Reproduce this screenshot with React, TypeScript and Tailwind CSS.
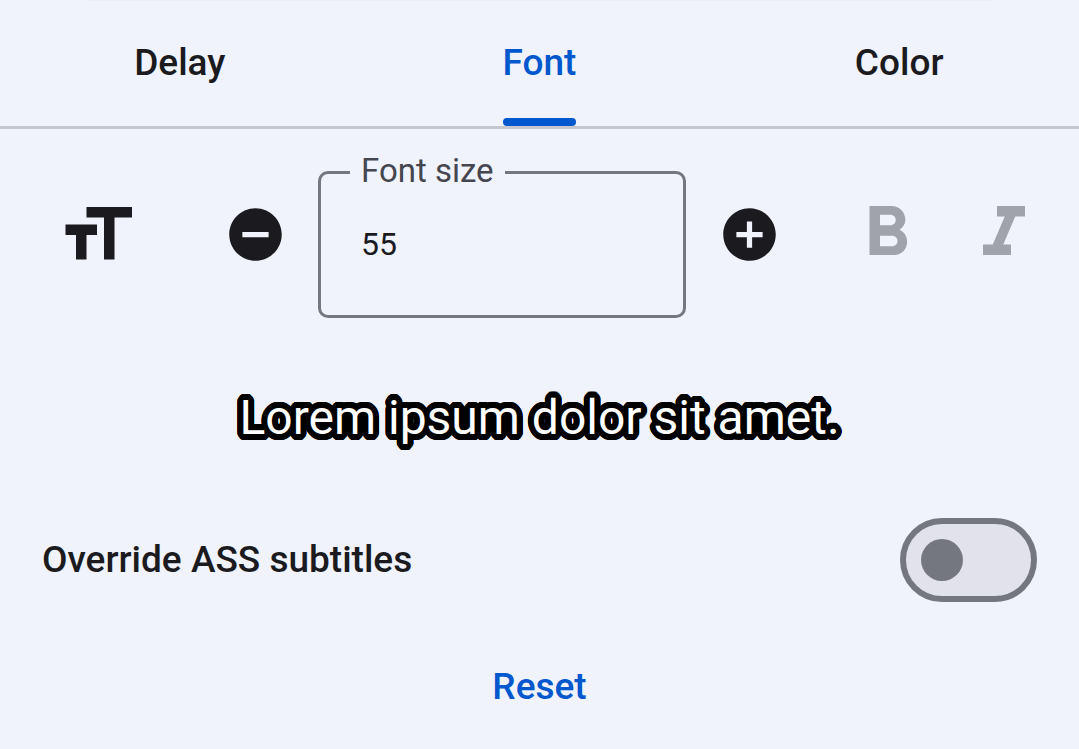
import { useState } from "react";
import {
  MdAddCircle,
  MdFormatBold,
  MdFormatItalic,
  MdFormatSize,
  MdRemoveCircle,
} from "react-icons/md";

const TABS = ["Delay", "Font", "Color"];
const DEFAULT_SIZE = 55;

// Rings of hard shadows that together form a round-cornered text outline.
function outline(radii: number[], color: string) {
  const steps = 32;
  return radii
    .flatMap((r) =>
      Array.from({ length: steps }, (_, i) => {
        const a = (i / steps) * Math.PI * 2;
        return `${(r * Math.cos(a)).toFixed(2)}px ${(r * Math.sin(a)).toFixed(2)}px 0 ${color}`;
      }),
    )
    .join(", ");
}

export default function App() {
  const [tab, setTab] = useState("Font");
  const [size, setSize] = useState(DEFAULT_SIZE);
  const [bold, setBold] = useState(false);
  const [italic, setItalic] = useState(false);
  const [override, setOverride] = useState(false);

  const reset = () => {
    setSize(DEFAULT_SIZE);
    setBold(false);
    setItalic(false);
    setOverride(false);
  };

  return (
    <main className="min-h-screen bg-[#f0f3fc] font-[Roboto,sans-serif] text-[#1b1b1f]">
      <div className="mx-[86px] h-px bg-[#ebeef7]" />

      <div role="tablist" className="grid grid-cols-3 border-b-3 border-[#c5c6d0]">
        {TABS.map((name) => (
          <button
            key={name}
            role="tab"
            aria-selected={tab === name}
            onClick={() => setTab(name)}
            className={
              tab === name
                ? "flex flex-col items-center pt-[7px] text-[37px] font-medium text-[#0057ce]"
                : "flex flex-col items-center pt-[7px] text-[37px] font-medium"
            }
          >
            <span className="flex flex-col">
              <span className="leading-[110px]">{name}</span>
              <span
                className={tab === name ? "h-2 rounded-full bg-[#0057ce]" : "h-2"}
              />
            </span>
          </button>
        ))}
      </div>

      <section className="flex items-center pt-[22px] pr-[33px] pl-[55px]">
        <MdFormatSize className="size-[84px] shrink-0" />
        <div className="ml-[53px] flex min-w-0 flex-1 items-center">
          <button
            aria-label="Decrease font size"
            onClick={() => setSize(size - 1)}
            className="flex size-[126px] shrink-0 items-center justify-center"
          >
            <MdRemoveCircle className="size-[63px]" />
          </button>
          <fieldset className="min-w-0 flex-1 rounded-[10px] border-3 border-[#757780] pb-5">
            <legend className="ml-[29px] px-[11px] pb-0.5 text-[33px] leading-[40px] text-[#45464f]">
              <label htmlFor="font-size">Font size</label>
            </legend>
            <input
              id="font-size"
              inputMode="numeric"
              value={size}
              onChange={(e) => setSize(Number(e.target.value) || 0)}
              className="h-[102px] w-full bg-transparent px-10 text-[32px] outline-none"
            />
          </fieldset>
          <button
            aria-label="Increase font size"
            onClick={() => setSize(size + 1)}
            className="flex size-[126px] shrink-0 items-center justify-center"
          >
            <MdAddCircle className="size-[63px]" />
          </button>
        </div>
        <div className="ml-[33px] flex gap-[33px] pb-px text-[#a0a3ab]">
          <button aria-label="Bold" aria-pressed={bold} onClick={() => setBold(!bold)}>
            <MdFormatBold className="size-[84px]" />
          </button>
          <button aria-label="Italic" aria-pressed={italic} onClick={() => setItalic(!italic)}>
            <MdFormatItalic className="size-[84px]" />
          </button>
        </div>
      </section>

      <p
        className="py-[68px] text-center text-[48px] leading-[64px] text-white"
        style={{
          textShadow: outline([6, 3], "#000"),
          fontWeight: bold ? 700 : 400,
          fontStyle: italic ? "italic" : "normal",
        }}
      >
        Lorem ipsum dolor sit amet.
      </p>

      <div className="flex items-center justify-between px-[42px]">
        <label htmlFor="override" className="text-[37px] leading-[60px] font-medium">
          Override ASS subtitles
        </label>
        <input
          id="override"
          type="checkbox"
          role="switch"
          checked={override}
          onChange={(e) => setOverride(e.target.checked)}
          className="flex h-[84px] w-[137px] appearance-none items-center rounded-full border-6 border-[#757780] bg-[#e2e2eb] px-[15px] before:size-[42px] before:rounded-full before:bg-[#757780] checked:justify-end"
        />
      </div>

      <div className="flex justify-center pt-[53px]">
        <button onClick={reset} className="px-8 text-[37px] leading-[64px] font-medium text-[#0057ce]">
          Reset
        </button>
      </div>
    </main>
  );
}
